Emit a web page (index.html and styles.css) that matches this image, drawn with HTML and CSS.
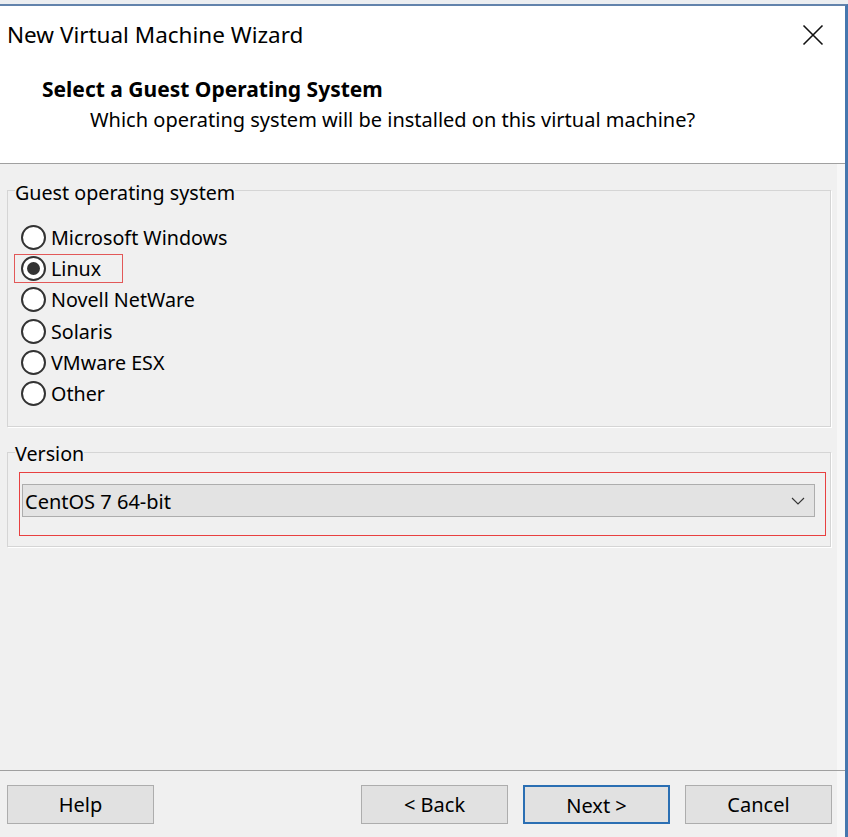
FILE: index.html
```html
<!DOCTYPE html>
<html lang="en">
<head>
<meta charset="utf-8">
<title>New Virtual Machine Wizard</title>
<link rel="stylesheet" href="styles.css">
</head>
<body>
<div class="screen">
  <div class="topstrip"></div>
  <div class="window">
    <header class="header">
      <div class="titlebar">
        <span class="title">New Virtual Machine Wizard</span>
        <svg class="close" width="22" height="22" viewBox="0 0 22 22" aria-hidden="true">
          <path d="M1.5 1.5 L20.5 20.5 M20.5 1.5 L1.5 20.5" stroke="#111" stroke-width="1.6" fill="none"/>
        </svg>
      </div>
      <div class="heading">Select a Guest Operating System</div>
      <div class="subheading">Which operating system will be installed on this virtual machine?</div>
    </header>
    <main class="content">
      <fieldset class="group group-os">
        <legend class="legend">Guest operating system</legend>
        <div class="radios">
          <label class="radio"><span class="circle"></span>Microsoft Windows</label>
          <label class="radio marked"><span class="circle checked"></span>Linux</label>
          <label class="radio"><span class="circle"></span>Novell NetWare</label>
          <label class="radio"><span class="circle"></span>Solaris</label>
          <label class="radio"><span class="circle"></span>VMware ESX</label>
          <label class="radio"><span class="circle"></span>Other</label>
        </div>
      </fieldset>
      <fieldset class="group group-version">
        <legend class="legend">Version</legend>
        <div class="mark-box">
          <div class="select">
            <span class="select-text">CentOS 7 64-bit</span>
            <svg class="chevron" width="14" height="8" viewBox="0 0 14 8" aria-hidden="true">
              <path d="M1 1 L7 7 L13 1" stroke="#333" stroke-width="1.1" fill="none"/>
            </svg>
          </div>
        </div>
      </fieldset>
    </main>
    <footer class="footer">
      <button class="btn">Help</button>
      <div class="footer-spacer"></div>
      <button class="btn">&lt; Back</button>
      <button class="btn btn-default">Next &gt;</button>
      <button class="btn">Cancel</button>
    </footer>
  </div>
</div>
</body>
</html>
```
FILE: styles.css
```css
* { box-sizing: border-box; }
html, body { margin: 0; padding: 0; }
body {
  font-family: "Noto Sans", "DejaVu Sans", sans-serif;
  color: #000;
  background: #f0f0f0;
}
.screen {
  width: 848px;
  height: 837px;
  display: flex;
  flex-direction: column;
  overflow: hidden;
  background: #f0f0f0;
}
.topstrip {
  height: 4px;
  background: #eceef1;
  flex: none;
}
.window {
  flex: 1;
  display: flex;
  flex-direction: column;
  border-top: 2px solid #6283ac;
  border-right: 3px solid #4677ae;
  background: linear-gradient(to left, #f7f7f7 8px, #f0f0f0 8px);
}
.header {
  height: 158px;
  flex: none;
  background: #fff;
  border-bottom: 1px solid #a0a0a0;
  padding-top: 15px;
}
.titlebar {
  height: 28px;
  display: flex;
  align-items: center;
  justify-content: space-between;
  padding-left: 7px;
  padding-right: 21px;
}
.title {
  font-size: 22.5px;
  line-height: 28px;
}
.close { display: block; }
.heading {
  margin-top: 27px;
  padding-left: 42px;
  font-size: 21px;
  font-weight: bold;
  line-height: 26px;
}
.subheading {
  margin-top: 5px;
  padding-left: 90px;
  font-size: 20px;
  line-height: 26px;
}
.content {
  flex: 1;
  padding: 13.5px 14px 0 7px;
  font-size: 19.7px;
}
.group {
  margin: 0;
  min-width: 0;
  border: 1px solid #d5d5d5;
  box-shadow: 1px 1px 0 #ffffff;
}
.legend {
  padding: 4px 0 0 0;
  margin-left: 1px;
  line-height: 22px;
  font-size: 19.7px;
}
.group-os {
  padding: 18px 6px 17px 6px;
}
.radios {
  display: flex;
  flex-direction: column;
  align-items: flex-start;
}
.radio {
  height: 31.3px;
  display: flex;
  align-items: center;
  gap: 5px;
  padding: 0 6px;
  border: 1px solid transparent;
  line-height: 29px;
}
.radio.marked {
  border-color: #e25858;
  width: 109px;
  height: 29px;
  margin: 1.15px 0;
}
.circle {
  width: 25px;
  height: 25px;
  border: 2px solid #333;
  border-radius: 50%;
  background: #fff;
  flex: none;
  display: flex;
  align-items: center;
  justify-content: center;
}
.circle.checked::after {
  content: "";
  width: 13px;
  height: 13px;
  border-radius: 50%;
  background: #333;
}
.group-version {
  margin-top: 12px;
  padding: 7px 4px 10px 6px;
}
.mark-box {
  margin-left: 5px;
  border: 1px solid #e84040;
  padding: 11px 10px 18px 2px;
}
.select {
  height: 33px;
  background: #e3e3e3;
  border: 1px solid #adadad;
  display: flex;
  align-items: center;
  justify-content: space-between;
  padding: 1px 9px 0 2px;
}
.select-text {
  font-size: 20px;
  line-height: 31px;
}
.chevron { display: block; }
.footer {
  height: 67px;
  flex: none;
  border-top: 1px solid #a0a0a0;
  display: flex;
  align-items: flex-start;
  gap: 15px;
  padding: 14px 13px 0 7px;
}
.footer-spacer { flex: 1; }
.btn {
  width: 147px;
  height: 39px;
  background: #e1e1e1;
  border: 1px solid #adadad;
  font-family: "Noto Sans", "DejaVu Sans", sans-serif;
  font-size: 20px;
  color: #000;
  padding: 0;
  line-height: 37px;
}
.btn-default {
  border: 2px solid #2b6fb3;
}
```
